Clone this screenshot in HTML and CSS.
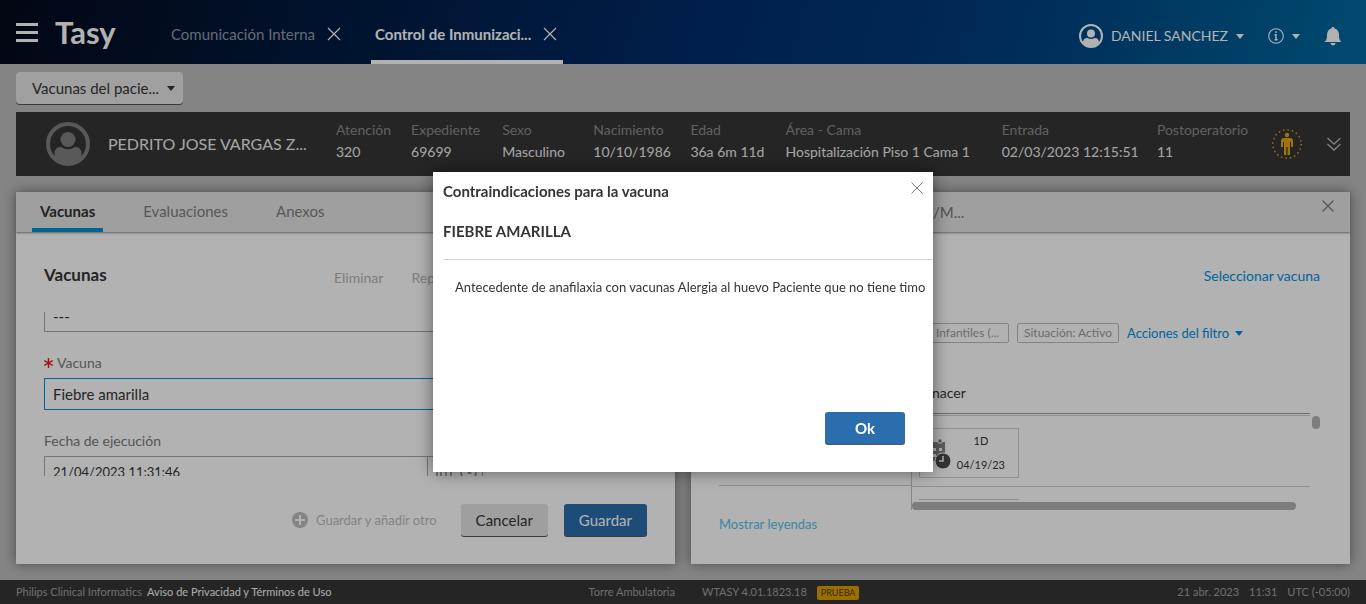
FILE: index.html
```html
<!DOCTYPE html>
<html lang="es">
<head>
<meta charset="utf-8">
<meta name="viewport" content="width=device-width, initial-scale=1">
<title>Tasy - Control de Inmunizaciones</title>
<link rel="stylesheet" href="styles.css">
</head>
<body>
<div class="app">
  <header class="topbar">
    <button class="icon-btn menu" aria-label="Menú"><svg width="22" height="20" viewBox="0 0 22 20"><path d="M0 1.5h22M0 9.5h22M0 17.5h22" stroke="currentColor" stroke-width="3"/></svg></button>
    <div class="brand">Tasy</div>
    <nav class="apps">
      <div class="app-tab"><a href="#">Comunicación Interna</a><button class="icon-btn" aria-label="Cerrar"><svg width="14" height="14" viewBox="0 0 14 14"><path d="M1 1l12 12M13 1L1 13" stroke="currentColor" stroke-width="1.2"/></svg></button></div>
      <div class="app-tab current"><a href="#">Control de Inmunizaci...</a><button class="icon-btn" aria-label="Cerrar"><svg width="14" height="14" viewBox="0 0 14 14"><path d="M1 1l12 12M13 1L1 13" stroke="currentColor" stroke-width="1.2"/></svg></button></div>
    </nav>
    <div class="account">
      <button class="icon-btn user"><svg width="24" height="24" viewBox="0 0 24 24"><circle cx="12" cy="12" r="11" fill="none" stroke="currentColor" stroke-width="2"/><circle cx="12" cy="9.5" r="4" fill="currentColor"/><path d="M4 19c0-4 2-5 4.500-5q3.500 2 7 0c2.500 0 4.500 1 4.500 5q-8 7-16 0z" fill="currentColor"/></svg><span>DANIEL SANCHEZ</span><i class="caret"></i></button>
      <button class="icon-btn info" aria-label="Información"><svg width="16" height="16" viewBox="0 0 16 16"><circle cx="8" cy="8" r="7.300" fill="none" stroke="currentColor" stroke-width="1.1"/><path d="M8 3.300v1.800M6.600 6.700H8v5M6.600 11.700h3" fill="none" stroke="currentColor" stroke-width="1.4"/></svg><i class="caret"></i></button>
      <button class="icon-btn" aria-label="Notificaciones"><svg width="18" height="19" viewBox="0 0 18 19"><path d="M9 0c1 0 1.500.6 1.500 1.400C13.500 2 15 4.500 15 8c0 4 .7 5.500 2.700 7H.3C2.300 13.500 3 12 3 8c0-3.500 1.500-6 4.500-6.600C7.500.6 8 0 9 0zM6.500 16h5a2.500 2.500 0 0 1-5 0z" fill="currentColor"/></svg></button>
    </div>
  </header>

  <main class="content">
    <button class="view-picker"><span>Vacunas del pacie...</span><i class="caret"></i></button>

    <section class="patient">
      <svg class="avatar" width="44" height="44" viewBox="0 0 44 44"><circle cx="22" cy="22" r="20" fill="none" stroke="currentColor" stroke-width="4"/><circle cx="22" cy="17.500" r="7.500" fill="currentColor"/><path d="M8.500 35v-4c0-4 3-6 6.500-6q7 4.500 14 0c3.500 0 6.500 2 6.500 6v4q-13.500 12-27 0z" fill="currentColor"/></svg>
      <h1 class="patient-name">PEDRITO JOSE VARGAS Z...</h1>
      <dl class="facts">
        <div><dt>Atención</dt><dd>320</dd></div>
        <div><dt>Expediente</dt><dd>69699</dd></div>
        <div><dt>Sexo</dt><dd>Masculino</dd></div>
        <div><dt>Nacimiento</dt><dd>10/10/1986</dd></div>
        <div><dt>Edad</dt><dd>36a 6m 11d</dd></div>
        <div><dt>Área - Cama</dt><dd>Hospitalización Piso 1 Cama 1</dd></div>
        <div><dt>Entrada</dt><dd>02/03/2023 12:15:51</dd></div>
        <div><dt>Postoperatorio</dt><dd>11</dd></div>
      </dl>
      <svg class="person" width="30" height="30" viewBox="0 0 30 30"><circle cx="15" cy="15" r="14.200" fill="none" stroke="currentColor" stroke-width="1.500" stroke-dasharray="1.500 2.960"/><circle cx="15" cy="6" r="2.200" fill="currentColor"/><path d="M12 9h6c2 0 3 1 3 3v6h-2v-5h-1v13h-2.400v-8h-1.200v8H12V13h-1v5H9v-6c0-2 1-3 3-3z" fill="currentColor"/></svg>
      <button class="icon-btn expand" aria-label="Expandir"><svg width="14" height="14" viewBox="0 0 14 14"><path d="M.5 1L7 7l6.500-6M.5 7L7 13l6.500-6" fill="none" stroke="currentColor" stroke-width="1.300"/></svg></button>
    </section>

    <div class="panels">
      <section class="panel">
        <nav class="tabs"><a class="active" href="#">Vacunas</a><a href="#">Evaluaciones</a><a href="#">Anexos</a></nav>
        <div class="form-head"><h2>Vacunas</h2><button class="flat" disabled>Eliminar</button><button class="flat" disabled>Rep</button></div>
        <div class="form-scroll">
          <input class="field tail" aria-label="Campo anterior" value="---">
          <label class="label" for="vacuna"><svg class="required" width="9" height="10" viewBox="0 0 9 10"><path d="M4.500 0v10M.3 2.500l8.400 5M8.700 2.500l-8.400 5" stroke="currentColor" stroke-width="1.400"/></svg>Vacuna</label>
          <input class="field focus" id="vacuna" value="Fiebre amarilla">
          <label class="label" for="fecha">Fecha de ejecución</label>
          <div class="date-row">
            <input class="field" id="fecha" value="21/04/2023 11:31:46">
            <button class="date-btn" aria-label="Abrir calendario"><svg width="16" height="16" viewBox="0 0 16 16"><path d="M1 3h14v12H1zM1 7h14M5 7v8M10 7v8M4 0v4M12 0v4" fill="none" stroke="currentColor" stroke-width="1.500"/></svg><svg width="17" height="17" viewBox="0 0 17 17"><circle cx="8.500" cy="8.500" r="7.500" fill="none" stroke="currentColor" stroke-width="1.500"/><path d="M8.500 4v5h3" fill="none" stroke="currentColor" stroke-width="1.500"/></svg></button>
          </div>
        </div>
        <div class="actions">
          <button class="add" disabled><svg width="16" height="16" viewBox="0 0 16 16"><circle cx="8" cy="8" r="8" fill="currentColor"/><path d="M8 3v10M3 8h10" stroke="#fff" stroke-width="2"/></svg>Guardar y añadir otro</button>
          <button class="btn">Cancelar</button>
          <button class="btn primary">Guardar</button>
        </div>
      </section>

      <section class="panel">
        <header class="side-head"><h2>/M...</h2><button class="icon-btn" aria-label="Cerrar"><svg width="12" height="12" viewBox="0 0 12 12"><path d="M.5.5l11 11M11.500.5l-11 11" stroke="currentColor" stroke-width="1.200"/></svg></button></header>
        <div class="side-link"><a href="#">Seleccionar vacuna</a></div>
        <div class="filters"><span class="chip wide">Infantiles (...</span><span class="chip">Situación: Activo</span><a href="#">Acciones del filtro<i class="caret"></i></a></div>
        <div class="schedule">
          <div class="names"></div>
          <div class="doses">
            <div class="age">nacer</div>
            <div class="dose-row"><div class="dose">
              <svg width="26" height="32" viewBox="0 0 26 32"><path d="M0 5h18v19H0z" fill="#858585"/><path d="M1 2h4v4H1zM11 2h4v4h-4z" fill="#757575" stroke="#fff"/><path d="M1 11h3v3H1zM6 11h3v3H6zM12 11h3v3h-3zM1 17h3v3H1zM6 17h3v3H6z" fill="#fff"/><circle cx="16" cy="24" r="8" fill="#4a4a4a" stroke="#fff"/><path d="M16 19v5h-4" fill="none" stroke="#fff" stroke-width="1.500"/></svg>
              <span>1D<br>04/19/23</span></div></div>
            <div class="dose-next"></div>
            <div class="hbar"></div>
          </div>
          <div class="vbar"></div>
        </div>
        <div class="legend"><a href="#">Mostrar leyendas</a></div>
      </section>
    </div>
  </main>

  <footer class="status">
    <div class="legal"><span>Philips Clinical Informatics</span><a href="#">Aviso de Privacidad y Términos de Uso</a></div>
    <div class="build"><span>Torre Ambulatoria</span><span class="version">WTASY 4.01.1823.18</span><span class="env">PRUEBA</span></div>
    <div class="clock"><span>21 abr. 2023</span><span>11:31</span><span>UTC (-05:00)</span></div>
  </footer>
</div>

<div class="backdrop">
  <div class="modal" role="dialog" aria-modal="true" aria-labelledby="modal-title">
    <header><h2 id="modal-title">Contraindicaciones para la vacuna</h2><button class="icon-btn" aria-label="Cerrar"><svg width="12" height="12" viewBox="0 0 12 12"><path d="M.5.5l11 11M11.500.5l-11 11" stroke="currentColor"/></svg></button></header>
    <h3>FIEBRE AMARILLA</h3>
    <p>Antecedente de anafilaxia con vacunas Alergia al huevo Paciente que no tiene timo</p>
    <div class="modal-actions"><button class="btn primary ok">Ok</button></div>
  </div>
</div>
</body>
</html>
```

FILE: styles.css
```css
* { box-sizing: border-box; }
body { margin: 0; font: 14px/20px Lato, "Open Sans", sans-serif; color: #353535; }
h1, h2, h3, p, dl, dd { margin: 0; }
a { color: #0090e0; text-decoration: none; }
button, input { font: inherit; color: inherit; }
button { border: 0; background: none; padding: 0; white-space: nowrap; }
svg { display: block; flex: none; }
.icon-btn { display: flex; align-items: center; }
.caret { border: 4px solid transparent; border-top: 5px solid currentColor; border-bottom: 0; }

.app { display: flex; flex-direction: column; min-height: 100vh; background: #bebebe; }

/* Top bar */
.topbar { display: flex; height: 64px; padding: 0 24px 0 16px; color: #fff; background: linear-gradient(105deg, #050a1c 0%, #011c43 26%, #002c69 50%, #003e7f 73%, #006ba0 100%); }
.menu { padding-top: 2px; }
.brand { flex: none; width: 116px; margin-left: 17px; padding-top: 12px; font-size: 31px; line-height: 40px; font-weight: 700; }
.apps { display: flex; gap: 24px; }
.app-tab { display: flex; align-items: center; gap: 12px; padding: 8px 6px 0 0; font-size: 15px; border-bottom: 4px solid transparent; }
.app-tab a { color: #939cae; }
.app-tab.current { padding-left: 4px; border-color: #fff; font-weight: 700; }
.app-tab.current a { color: #fff; }
.account { display: flex; align-items: center; gap: 24px; margin-left: auto; padding-top: 8px; }
.user { gap: 8px; }
.info { gap: 8px; }

/* Content */
.content { flex: 1; display: flex; flex-direction: column; padding: 8px 16px 16px; }
.view-picker { display: flex; align-items: center; justify-content: space-between; align-self: flex-start; width: 167px; height: 32px; padding: 0 8px 0 16px; margin-bottom: 8px; border-radius: 4px; background: #e6e6e6; box-shadow: 0 1px #555; font-size: 15px; }

.patient { display: flex; align-items: center; height: 64px; padding: 0 8px 0 30px; margin-bottom: 16px; background: #353535; color: #ededed; }
.avatar { color: #808080; }
.patient-name { width: 212px; margin: 0 16px 0 18px; font-size: 16px; font-weight: 400; white-space: nowrap; }
.facts { flex: 1; display: grid; grid-template-columns: 75fr 91fr 91fr 97fr 95fr 216fr 155fr 115fr; padding-bottom: 6px; white-space: nowrap; line-height: 22px; }
.facts dt { color: #8c8c8c; font-size: 14px; }
.person { color: #e0a41c; }
.expand { margin-left: 25px; margin-right: 1px; color: #bbb; }

.panels { flex: 1; display: grid; grid-template-columns: 1fr 1fr; gap: 16px; }
.panel { display: flex; flex-direction: column; min-width: 0; background: #fff; box-shadow: 0 0 12px rgba(0, 0, 0, .45); }
.tabs, .side-head { display: flex; height: 40px; background: #e4e4e4; box-shadow: 0 1px 2px #8a8a8a; font-size: 15px; }
.tabs { gap: 32px; padding-left: 16px; }
.tabs a { padding: 9px 8px 0; color: #7e7e7e; }
.tabs .active { color: #303030; font-weight: 700; border-bottom: 4px solid #0090d9; }

.form-head { display: flex; align-items: center; gap: 28px; padding: 32px 28px 0; margin-bottom: 26px; height: 54px; }
.form-head h2 { width: 262px; font-size: 17px; }
.flat { color: #b5b5b5; padding-top: 6px; }
.form-scroll { display: flex; flex-direction: column; height: 164px; padding: 0 28px; overflow: hidden; }
.field { flex: none; width: 100%; min-width: 0; height: 32px; padding: 0 8px; border: 1px solid #a9a9a9; border-radius: 0; background: #fff; color: #353535; font-size: 15px; }
.tail { margin-top: -12px; }
.focus { border-color: #0090d9; }
.label { display: flex; align-items: center; margin: 21px 0 5px; line-height: 20px; color: #7b7b7b; }
.required { color: #e6192e; margin-right: 4px; }
.date-row { display: flex; }
.date-row .field { width: 384px; font-size: 13px; }
.date-btn { display: flex; align-items: center; gap: 8px; height: 32px; padding: 0 5px 0 8px; border: 1px solid #a9a9a9; border-left: 0; color: #8a8a8a; }
.actions { display: flex; align-items: center; justify-content: flex-end; gap: 16px; padding: 28px; margin-top: auto; }
.add { display: flex; align-items: center; gap: 8px; margin-right: 8px; color: #bcbcbc; font-size: 13px; }
.btn { height: 32px; padding: 0 15px; border-radius: 3px; background: #e4e4e4; box-shadow: 0 1px #555; color: #353535; font-size: 15px; }
.primary { background: #2a6ead; color: #fff; }

/* Schedule panel */
.side-head { padding: 8px 16px 0 242px; justify-content: space-between; align-items: flex-start; color: #777; }
.side-head h2 { font-size: 15px; font-weight: 400; line-height: 24px; }
.side-link { padding: 34px 30px 0; text-align: right; }
.filters { display: flex; align-items: center; gap: 8px; margin-top: 37px; padding-left: 238px; font-size: 13px; }
.filters a { display: flex; align-items: center; gap: 6px; }
.chip { height: 20px; padding: 0 6px; border: 1px solid #bebebe; border-radius: 2px; color: #9b9b9b; font-size: 12px; line-height: 18px; }
.wide { width: 80px; }
.schedule { display: grid; grid-template-columns: 192px 1fr 8px; margin: 40px 30px 0 28px; }
.names { height: 103px; border-bottom: 1px solid #cdcdcd; }
.doses { border-left: 1px solid #c2c2c2; margin-right: 2px; }
.age { height: 31px; padding-left: 20px; border-bottom: 1px solid #9a9a9a; }
.dose-row { height: 72px; margin-top: 1px; padding: 12px 7px; border: solid #cdcdcd; border-width: 1px 0; }
.dose { display: flex; align-items: center; justify-content: space-between; width: 100px; height: 50px; padding: 0 13px 0 7px; border: 1px solid #cdcdcd; font-size: 11px; line-height: 24px; text-align: center; }
.dose-next { width: 100px; height: 3px; margin: 12px 7px 0; border-top: 1px solid #cdcdcd; }
.hbar { height: 8px; margin-right: 14px; border-radius: 4px; background: #b4b4b4; }
.vbar { height: 13px; margin-top: 33px; border-radius: 4px; background: #b4b4b4; }
.legend { padding: 4px 28px; font-size: 13px; }
.legend a { color: #57bfee; }

.status { display: grid; grid-template-columns: 1fr auto 1fr; align-items: center; height: 24px; padding: 0 16px; background: #353535; color: #a0a0a0; font-size: 11px; white-space: nowrap; }
.status a { margin-left: 5px; color: #f5f5f5; }
.build { padding-left: 82px; }
.version { margin-left: 27px; }
.env { display: inline-block; margin-left: 10px; padding: 0 4px; border-radius: 2px; background: #dda000; color: #4b3b10; font-size: 9px; line-height: 14px; }
.clock { display: flex; justify-content: flex-end; gap: 10px; }

/* Dialog */
.backdrop { position: fixed; inset: 0; display: grid; place-items: center; padding-top: 40px; background: rgba(0, 0, 0, .3); }
.modal { display: flex; flex-direction: column; width: 500px; min-height: 300px; padding: 6px 0 28px 10px; background: #fff; box-shadow: 0 0 16px rgba(0, 0, 0, .5); }
.modal header { display: flex; justify-content: space-between; align-items: flex-start; padding-right: 10px; }
.modal header .icon-btn { height: 20px; color: #777; }
.modal h2, .modal h3 { font-size: 15px; line-height: 26px; }
.modal h3 { margin-top: 14px; padding-bottom: 15px; border-bottom: 1px solid #d5d5d5; }
.modal p { padding: 17px 8px 0 12px; font-size: 13px; white-space: nowrap; }
.modal-actions { display: flex; justify-content: flex-end; margin-top: auto; padding-right: 28px; }
.ok { width: 80px; font-weight: 700; }
```
